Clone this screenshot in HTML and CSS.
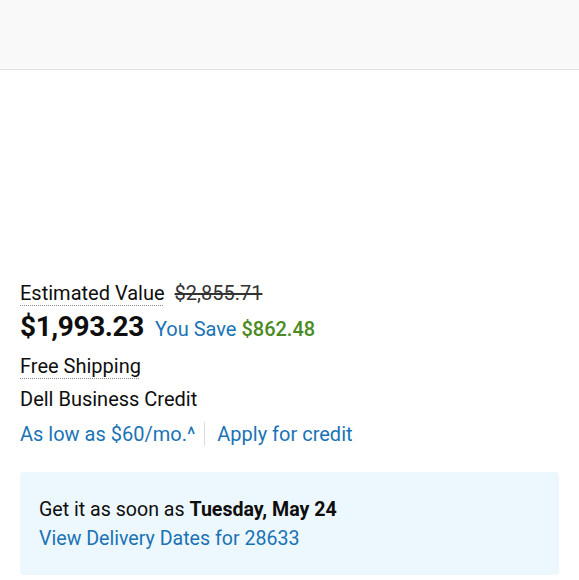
FILE: index.html
```html
<!DOCTYPE html>
<html>
<head>
<meta charset="utf-8">
<link rel="stylesheet" href="styles.css">
</head>
<body>
<header class="topbar"></header>
<main class="content">
  <div class="media"></div>
  <div class="est-row">
    <span class="est-label">Estimated Value</span>
    <span class="est-old">$2,855.71</span>
  </div>
  <div class="price-row">
    <span class="price">$1,993.23</span>
    <span class="save">You Save <span class="save-amt">$862.48</span></span>
  </div>
  <div class="ship-row"><span class="ship">Free Shipping</span></div>
  <div class="credit-row">Dell Business Credit</div>
  <div class="links-row">
    <a class="link">As low as $60/mo.^</a>
    <span class="sep"></span>
    <a class="link">Apply for credit</a>
  </div>
  <section class="delivery">
    <div class="del-line">Get it as soon as <strong>Tuesday, May 24</strong></div>
    <a class="link del-link">View Delivery Dates for 28633</a>
  </section>
</main>
</body>
</html>
```
FILE: styles.css
```css
* { box-sizing: border-box; }
html, body { margin: 0; padding: 0; background: #fff; }
body {
  font-family: Roboto, "Liberation Sans", Arial, sans-serif;
  color: #0e0e0e;
  font-size: 20px;
  overflow: hidden;
}
.topbar {
  height: 70px;
  background: #f9f9f9;
  border-bottom: 1px solid #e1e1e1;
}
.content {
  padding: 0 20px;
}
.media {
  height: 211px;
}
.est-row {
  line-height: 24px;
  display: flex;
  gap: 10px;
}
.est-label {
  text-decoration: underline dotted #8a8a8a;
  text-decoration-thickness: 1px;
  text-underline-offset: 5px;
}
.est-old {
  text-decoration: line-through;
  color: #333;
}
.price-row {
  margin-top: 5px;
  display: flex;
  align-items: baseline;
  gap: 11px;
  line-height: 34px;
}
.price {
  font-size: 28px;
  font-weight: 700;
  letter-spacing: -0.4px;
}
.save {
  color: #1a73b4;
}
.save-amt {
  color: #4a8a1f;
  font-weight: 500;
}
.ship-row {
  margin-top: 8px;
  line-height: 24px;
}
.ship {
  text-decoration: underline dotted #8a8a8a;
  text-decoration-thickness: 1px;
  text-underline-offset: 5px;
}
.credit-row {
  margin-top: 9px;
  line-height: 24px;
}
.links-row {
  margin-top: 10px;
  display: flex;
  align-items: center;
  line-height: 26px;
}
.link {
  color: #1a73b4;
  text-decoration: none;
}
.sep {
  width: 1px;
  height: 24px;
  background: #dcdcdc;
  margin: 0 12px 0 9px;
}
.delivery {
  margin-top: 25px;
  background: #edf7fe;
  border-radius: 4px;
  padding: 23px 19px 22px;
  line-height: 29px;
  font-size: 19.6px;
}
.del-line strong { font-weight: 700; }
.del-link { display: block; }
```
